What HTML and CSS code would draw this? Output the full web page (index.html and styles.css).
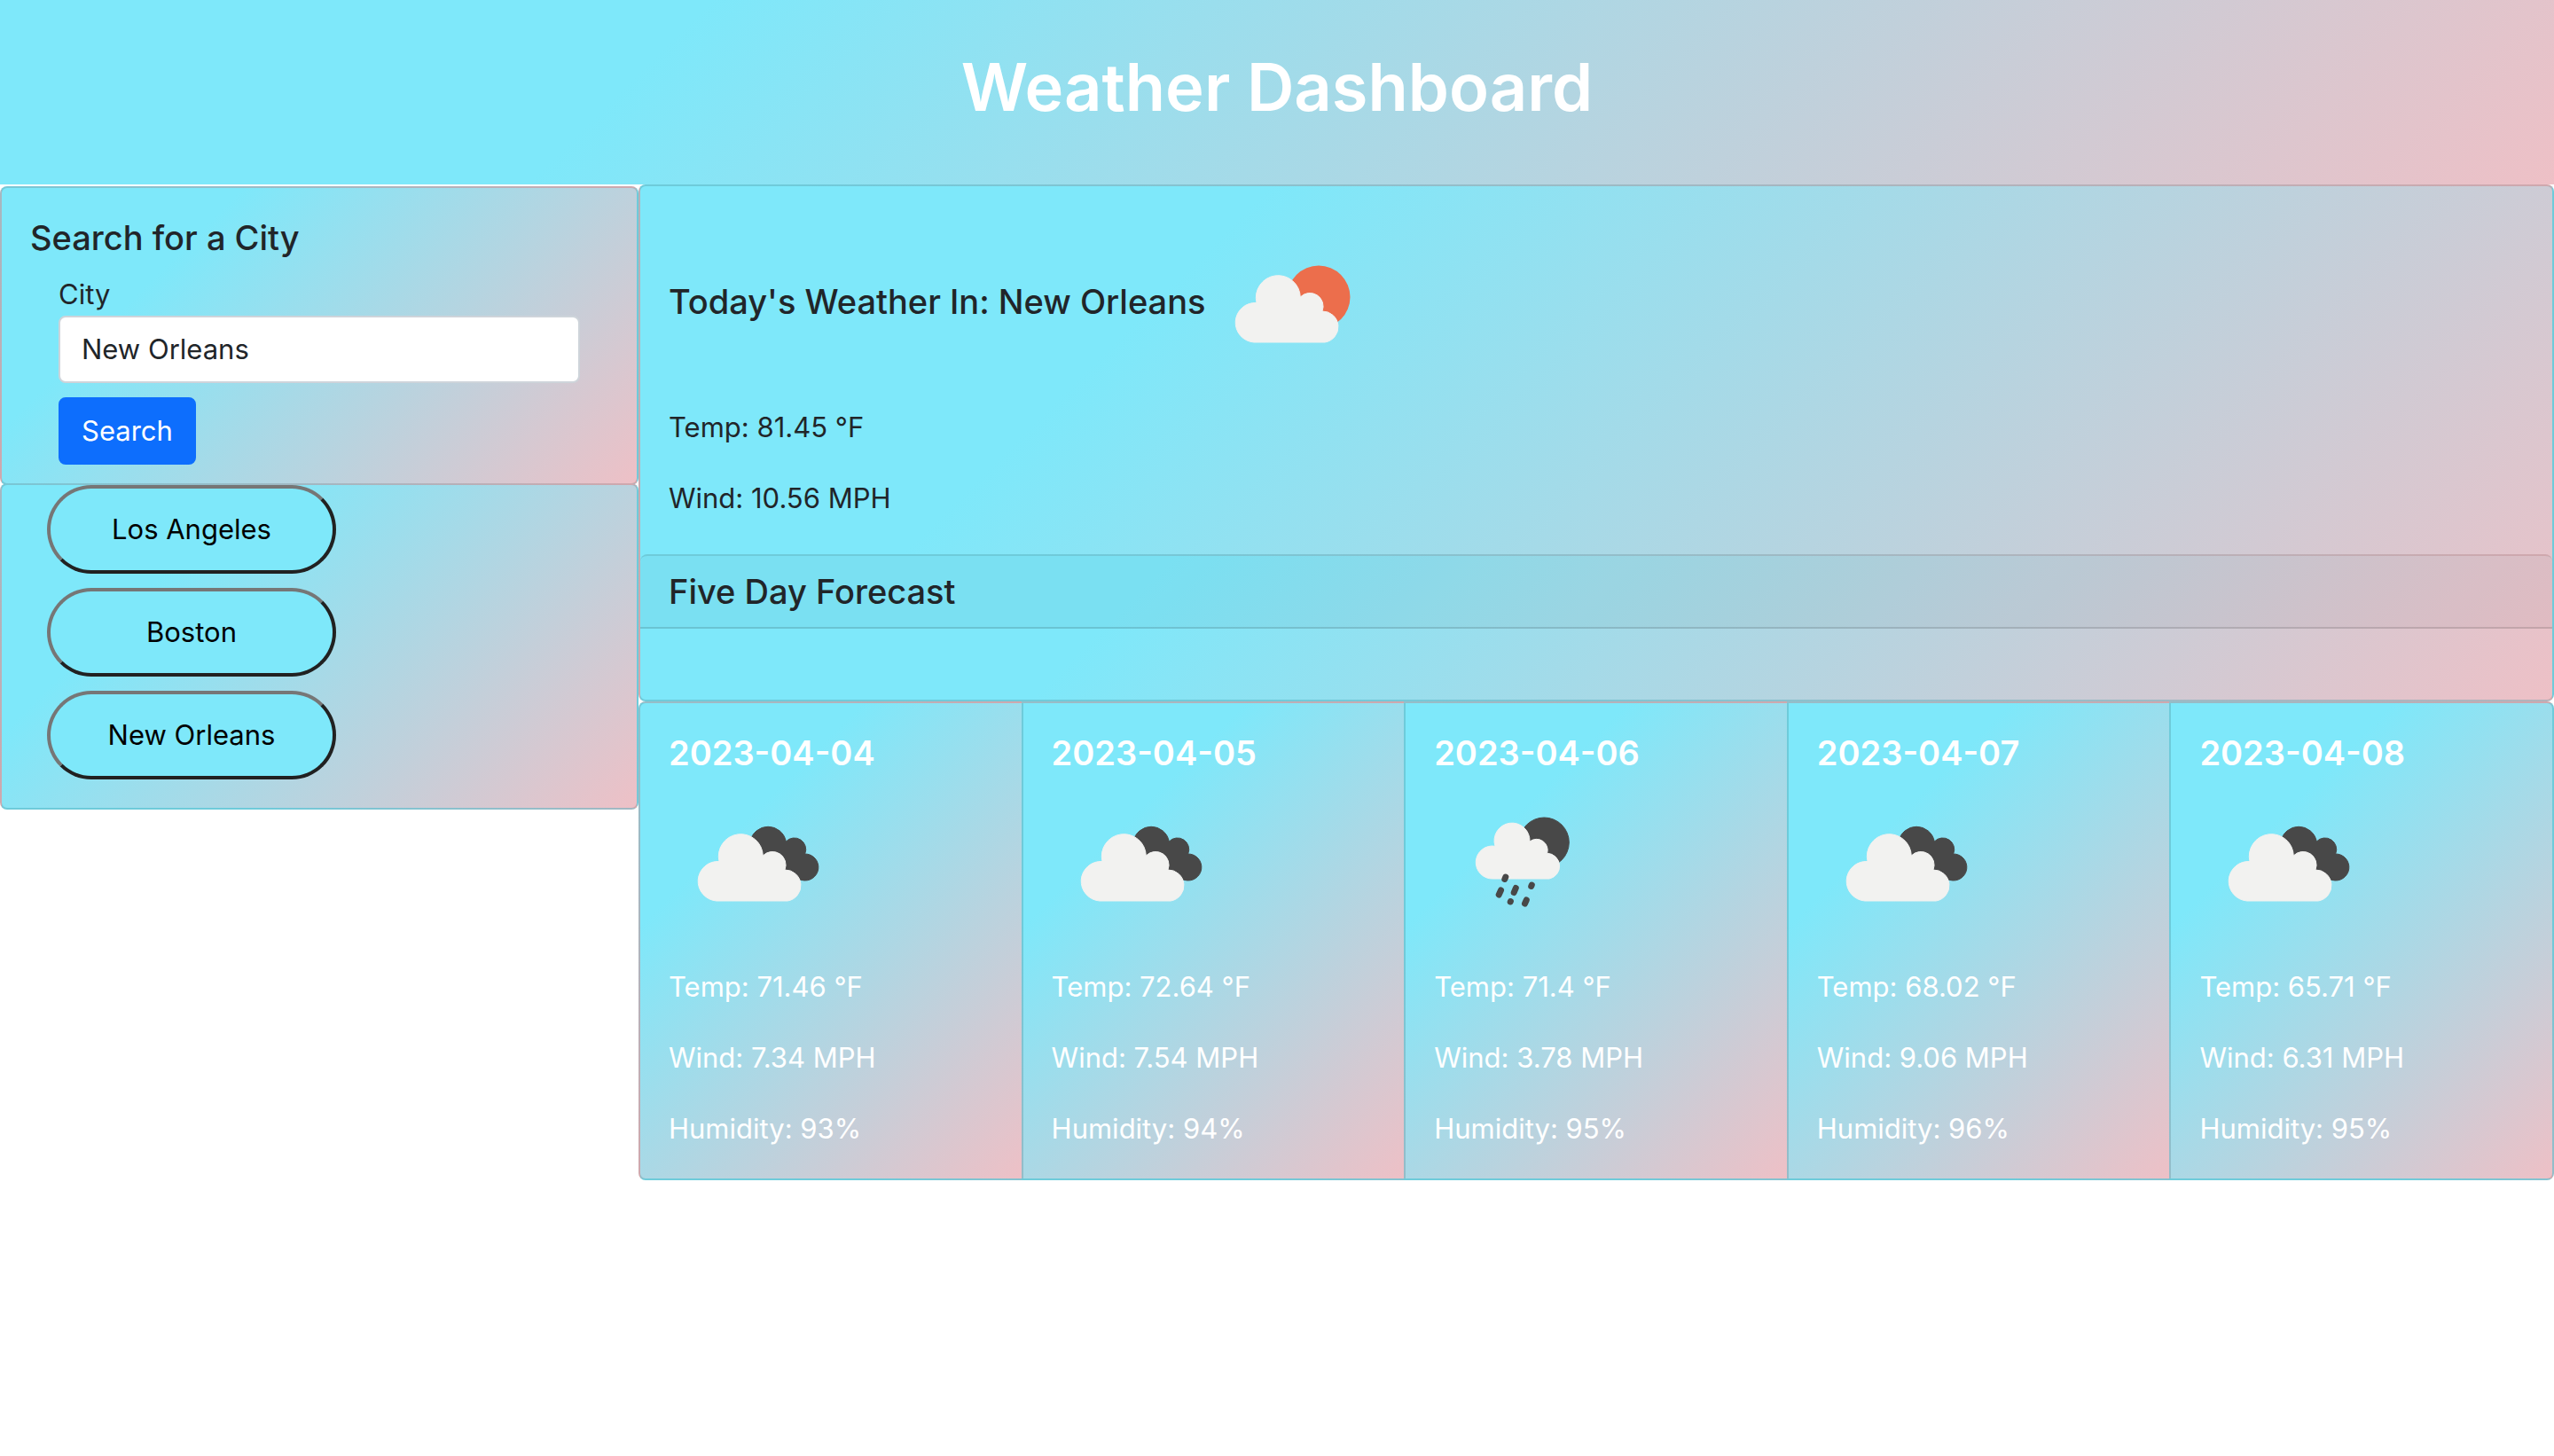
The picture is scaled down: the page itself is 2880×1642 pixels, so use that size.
FILE: index.html
```html
<!DOCTYPE html>
<html lang="en">
<head>
<meta charset="utf-8">
<meta name="viewport" content="width=device-width, initial-scale=1">
<title>Weather Dashboard</title>
<link rel="stylesheet" href="styles.css">
</head>
<body>
<svg class="symbols" aria-hidden="true">
  <symbol id="icon-broken" viewBox="0 0 200 200">
    <path class="dark" d="M92 76A20.500 20.500 0 0 1 132.300 76A13 13 0 0 1 153.700 90A15 15 0 1 1 150 119.500L110 110Z"/>
    <path class="cloud" d="M54 143A22.300 22.300 0 1 1 57 98.500A25 25 0 1 1 106.300 92A15 15 0 0 1 131 108A17.600 17.600 0 0 1 134 143Z"/>
  </symbol>
  <symbol id="icon-few" viewBox="0 -3 200 200">
    <circle cx="127" cy="92" r="35.500" fill="#ec6e4c"/>
    <path class="cloud" d="M54 143A22.300 22.300 0 1 1 57 98.500A25 25 0 1 1 106.300 92A15 15 0 0 1 131 108A17.600 17.600 0 0 1 134 143Z"/>
  </symbol>
  <symbol id="icon-rain" viewBox="0 0 200 200">
    <circle class="dark" cx="124.300" cy="77" r="28"/>
    <path class="cloud" d="M66.500 118A18.500 18.500 0 1 1 69 81.300A20 20 0 1 1 108 76A12.500 12.500 0 0 1 127.700 89.300A14.500 14.500 0 0 1 130 118Z"/>
    <path fill="none" stroke="#484848" stroke-width="7" stroke-linecap="round" d="M80.800 116L79.800 118.500M75.500 131L73.200 136M92.300 128.500L90.200 133.500M110.300 125L109.700 126.500M86.400 143.500L86.200 144M104.300 142L102.500 146"/>
  </symbol>
</svg>

<header class="banner"><h1>Weather Dashboard</h1></header>

<div class="layout">
  <aside class="sidebar">
    <section class="card search">
      <h2 class="title">Search for a City</h2>
      <form class="search-form">
        <label for="city">City</label>
        <input id="city" type="text" value="New Orleans">
        <button class="submit" type="submit">Search</button>
      </form>
    </section>
    <section class="card history">
      <button type="button">Los Angeles</button>
      <button type="button">Boston</button>
      <button type="button">New Orleans</button>
    </section>
  </aside>

  <main class="content">
    <section class="card">
      <div class="today">
        <h2 class="title today-title">Today's Weather In: New Orleans
          <svg class="icon" role="img" aria-label="Few clouds"><use href="#icon-few"/></svg></h2>
        <p>Temp: 81.45 °F</p>
        <p>Wind: 10.56 MPH</p>
      </div>
      <div class="card upcoming">
        <h2 class="title upcoming-title">Five Day Forecast</h2>
        <div class="upcoming-body"></div>
      </div>
    </section>

    <div class="forecast">
      <article class="card day">
        <h3 class="title">2023-04-04</h3>
        <svg class="icon" role="img" aria-label="Broken clouds"><use href="#icon-broken"/></svg>
        <p>Temp: 71.46 °F</p><p>Wind: 7.34 MPH</p><p>Humidity: 93%</p>
      </article>
      <article class="card day">
        <h3 class="title">2023-04-05</h3>
        <svg class="icon" role="img" aria-label="Broken clouds"><use href="#icon-broken"/></svg>
        <p>Temp: 72.64 °F</p><p>Wind: 7.54 MPH</p><p>Humidity: 94%</p>
      </article>
      <article class="card day">
        <h3 class="title">2023-04-06</h3>
        <svg class="icon" role="img" aria-label="Rain"><use href="#icon-rain"/></svg>
        <p>Temp: 71.4 °F</p><p>Wind: 3.78 MPH</p><p>Humidity: 95%</p>
      </article>
      <article class="card day">
        <h3 class="title">2023-04-07</h3>
        <svg class="icon" role="img" aria-label="Broken clouds"><use href="#icon-broken"/></svg>
        <p>Temp: 68.02 °F</p><p>Wind: 9.06 MPH</p><p>Humidity: 96%</p>
      </article>
      <article class="card day">
        <h3 class="title">2023-04-08</h3>
        <svg class="icon" role="img" aria-label="Broken clouds"><use href="#icon-broken"/></svg>
        <p>Temp: 65.71 °F</p><p>Wind: 6.31 MPH</p><p>Humidity: 95%</p>
      </article>
    </div>
  </main>
</div>
</body>
</html>
```
FILE: styles.css
```css
* { box-sizing: border-box; }

:root {
  --sky: linear-gradient(135deg, #7ee8fa 26%, #eec0c6 100%);
  --line: rgba(0, 0, 0, 0.125);
}

body {
  margin: 0;
  background: #fff;
  color: #212529;
  font: 400 31px/48px Inter, "Liberation Sans", sans-serif;
}

h1, h2, h3, p { margin: 0; }
button, input { font: inherit; }
.symbols { position: absolute; width: 0; height: 0; }
.cloud { fill: #f2f2f0; stroke: #f2f2f0; }
.dark { fill: #484848; stroke: #484848; }

.banner {
  padding: 50px 0 62px;
  background: var(--sky);
  color: #fff;
  text-align: center;
}
.banner h1 { font-size: 74px; line-height: 96px; font-weight: 600; }

.layout { display: grid; grid-template-columns: 1fr 3fr; align-items: start; }
.content { min-width: 0; }

.card {
  border: 2px solid var(--line);
  border-radius: 8px;
  background-image: var(--sky);
}
.title { font-size: 38px; line-height: 48px; font-weight: 500; }

.sidebar { padding-top: 2px; }
.search { padding: 32px 32px 21px; }
.search-form {
  display: flex;
  flex-direction: column;
  align-items: flex-start;
  padding: 16px 32px 0;
}
.search-form input {
  width: 100%;
  padding: 12px 24px;
  border: 2px solid #ced4da;
  border-radius: 8px;
  background: #fff;
  color: #212529;
}
.submit {
  margin-top: 16px;
  padding: 12px 24px;
  border: 2px solid #0d6efd;
  border-radius: 8px;
  background: #0d6efd;
  color: #fff;
}

.history {
  display: flex;
  flex-direction: column;
  align-items: flex-start;
  gap: 16px;
  margin-top: -2px;
  padding: 0 51px 32px;
}
.history button {
  width: 326px;
  height: 100px;
  border: 4px solid;
  border-color: #767676 #212121 #212121 #767676;
  border-radius: 50px;
  background: #7ee8fa;
  color: #000;
}

.today { padding: 30px 32px 39px; }
.today p + p { margin-top: 32px; }
.today-title { display: flex; align-items: center; margin-bottom: 18px; }
.icon { display: block; flex: none; width: 200px; height: 200px; }

.upcoming { border-width: 2px 0 0; }
.upcoming-title {
  padding: 16px 32px;
  border-bottom: 2px solid var(--line);
  border-radius: 8px 8px 0 0;
  background: rgba(0, 0, 0, 0.03);
}
.upcoming-body { height: 80px; }

.forecast { display: flex; }
.day {
  flex: 1 1 0;
  min-width: 0;
  padding: 32px;
  border-left-width: 0;
  border-radius: 0;
  color: #fff;
}
.day:first-child { border-left-width: 2px; border-radius: 8px 0 0 8px; }
.day:last-child { border-radius: 0 8px 8px 0; }
.day .title { font-weight: 600; }
.day .icon { margin-bottom: 16px; }
.day p + p { margin-top: 32px; }
```
